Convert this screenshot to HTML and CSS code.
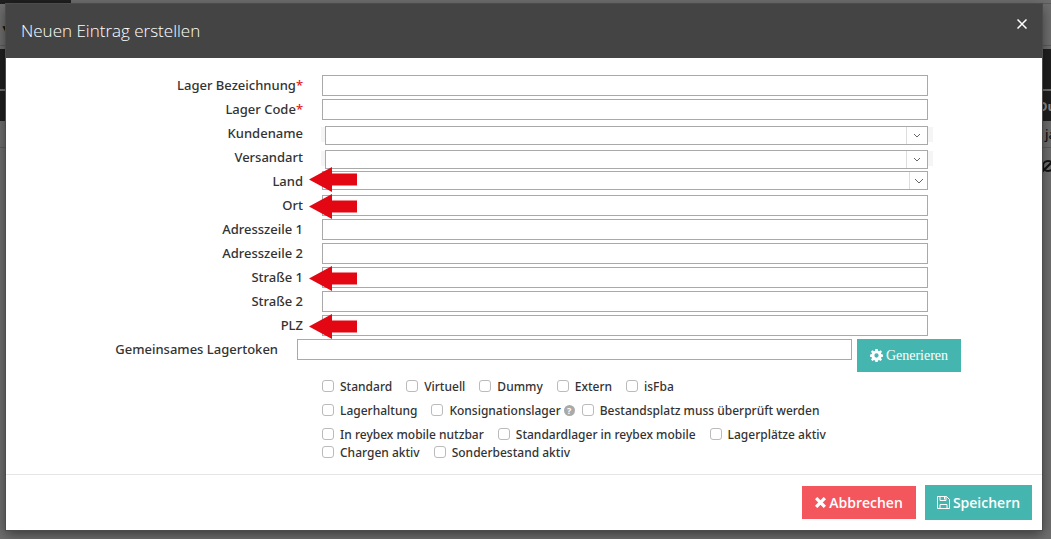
FILE: index.html
```html
<!DOCTYPE html>
<html lang="de">
<head>
  <meta charset="UTF-8" />
  <title>Neuen Eintrag erstellen</title>
  <link rel="stylesheet" href="styles.css">
</head>
<body>
  <!-- Lagerliste im Hintergrund -->
  <div class="page">
    <div class="page-top"><div class="page-tab"></div></div>
    <div class="page-toolbar"><span>▼</span></div>
    <div class="page-nav"></div>
    <div class="page-head"><span>Du</span></div>
    <div class="page-row"><span>ja</span></div>
    <div class="page-row page-row-last">
      <svg width="14" height="14" viewBox="0 0 14 14" fill="none" stroke="currentColor" stroke-width="2"><circle cx="7" cy="7" r="5"/><path d="M1 13L13 1"/></svg>
    </div>
  </div>

  <!-- Dialog -->
  <div class="overlay">
    <form class="modal" role="dialog" aria-labelledby="modalTitle">
      <div class="modal-header">
        <h1 id="modalTitle">Neuen Eintrag erstellen</h1>
        <button type="button" class="close" aria-label="Schließen">
          <svg width="10" height="10" viewBox="0 0 10 10" fill="none" stroke="currentColor" stroke-width="1.500"><path d="M.5.5L9.500 9.500M9.500.5L.5 9.500"/></svg>
        </button>
      </div>

      <div class="modal-body">
        <div class="row">
          <label for="name">Lager Bezeichnung<span class="required">*</span></label>
          <input type="text" id="name">
        </div>
        <div class="row">
          <label for="code">Lager Code<span class="required">*</span></label>
          <input type="text" id="code">
        </div>
        <div class="row">
          <label for="customer">Kundename</label>
          <div class="select combo">
            <select id="customer"><option></option></select>
            <span class="arrow"><svg width="8" height="5" viewBox="0 0 8 5"><path d="M1 1L4 4L7 1"/></svg></span>
          </div>
        </div>
        <div class="row">
          <label for="shipping">Versandart</label>
          <div class="select combo">
            <select id="shipping"><option></option></select>
            <span class="arrow"><svg width="8" height="5" viewBox="0 0 8 5"><path d="M1 1L4 4L7 1"/></svg></span>
          </div>
        </div>
        <div class="row">
          <label for="country">Land</label>
          <div class="select">
            <select id="country"><option></option></select>
            <span class="arrow"><svg width="10" height="6" viewBox="0 0 10 6"><path d="M1 1L5 5L9 1"/></svg></span>
          </div>
          <svg class="marker marker-high" viewBox="0 0 48 25"><path d="M0 12.500L23 0V6.500H48V18.500H23V25Z"/></svg>
        </div>
        <div class="row">
          <label for="city">Ort</label>
          <input type="text" id="city">
          <svg class="marker" viewBox="0 0 48 25"><path d="M0 12.500L23 0V6.500H48V18.500H23V25Z"/></svg>
        </div>
        <div class="row">
          <label for="address1">Adresszeile 1</label>
          <input type="text" id="address1">
        </div>
        <div class="row">
          <label for="address2">Adresszeile 2</label>
          <input type="text" id="address2">
        </div>
        <div class="row">
          <label for="street1">Straße 1</label>
          <input type="text" id="street1">
          <svg class="marker" viewBox="0 0 48 25"><path d="M0 12.500L23 0V6.500H48V18.500H23V25Z"/></svg>
        </div>
        <div class="row">
          <label for="street2">Straße 2</label>
          <input type="text" id="street2">
        </div>
        <div class="row">
          <label for="zip">PLZ</label>
          <input type="text" id="zip">
          <svg class="marker" viewBox="0 0 48 25"><path d="M0 12.500L23 0V6.500H48V18.500H23V25Z"/></svg>
        </div>
        <div class="row row-token">
          <label for="token">Gemeinsames Lagertoken</label>
          <input type="text" id="token">
          <button type="button" class="btn btn-generate">
            <svg width="13" height="13" viewBox="0 0 14 14"><path fill="currentColor" fill-rule="evenodd" d="M5.800 0h2.400l.4 1.900 1.100.5L11.400 1.300l1.500 1.600-1.100 1.600.5 1.200 1.700.3v2.300l-1.700.4-.5 1.100 1.100 1.600-1.600 1.600-1.600-1.100-1.100.5-.4 1.600H5.800l-.4-1.600-1.100-.5-1.600 1.100-1.600-1.600 1.100-1.600-.5-1.100L0 8.300V6l1.700-.3.5-1.200L1.100 2.900l1.500-1.600 1.700 1.100 1.100-.5zM7 4.700a2.300 2.300 0 1 0 0 4.600 2.300 2.300 0 0 0 0-4.600z"/></svg>
            Generieren
          </button>
        </div>

        <div class="checks">
          <div class="check-row">
            <label><input type="checkbox">Standard</label>
            <label><input type="checkbox">Virtuell</label>
            <label><input type="checkbox">Dummy</label>
            <label><input type="checkbox">Extern</label>
            <label><input type="checkbox">isFba</label>
          </div>
          <div class="check-row">
            <label><input type="checkbox">Lagerhaltung</label>
            <div class="with-help">
              <label><input type="checkbox">Konsignationslager</label>
              <span class="help">?</span>
            </div>
            <label><input type="checkbox">Bestandsplatz muss überprüft werden</label>
          </div>
          <div class="check-row check-row-tight">
            <label><input type="checkbox">In reybex mobile nutzbar</label>
            <label><input type="checkbox">Standardlager in reybex mobile</label>
            <label><input type="checkbox">Lagerplätze aktiv</label>
          </div>
          <div class="check-row check-row-tight">
            <label><input type="checkbox">Chargen aktiv</label>
            <label><input type="checkbox">Sonderbestand aktiv</label>
          </div>
        </div>
      </div>

      <div class="modal-footer">
        <button type="button" class="btn btn-cancel">
          <svg width="11" height="11" viewBox="0 0 10 10"><path fill="none" stroke="currentColor" stroke-width="3" d="M1 1L9 9M9 1L1 9"/></svg>
          Abbrechen
        </button>
        <button type="submit" class="btn btn-save">
          <svg width="13" height="13" viewBox="0 0 13 13" fill="none" stroke="currentColor"><path d="M.5.5H9.500L12.500 3.500V12.500H.5ZM3 .5V4.500H9V.5M3 12.500V8.500H10V12.500M7.500 1V3.500"/></svg>
          Speichern
        </button>
      </div>
    </form>
  </div>
</body>
</html>
```

FILE: styles.css
```css
* {
  box-sizing: border-box;
}
body {
  margin: 0;
  min-height: 100vh;
  background: #6e6e6e;
  color: #333;
  font-family: "Noto Sans", "Open Sans", sans-serif;
  font-size: 13px;
  font-weight: 500;
  overflow: hidden;
}

/* Hintergrundseite */
.page {
  color: #111;
}
.page-top {
  height: 4px;
  border-bottom: 1px solid #5c5c5c;
}
.page-tab {
  width: 71px;
  height: 4px;
  background: #1f1f1f;
}
.page-toolbar {
  height: 42px;
  padding-top: 16px;
  border-bottom: 1px solid #5c5c5c;
  font-size: 12px;
}
.page-nav {
  height: 40px;
  margin: 3px 0 2px;
  background: #1f1f1f;
}
.page-head,
.page-row {
  display: flex;
  align-items: center;
  justify-content: flex-end;
  overflow: hidden;
}
.page-head {
  height: 30px;
  background: #1f1f1f;
  color: #8a8a8a;
  font-weight: bold;
}
.page-head span {
  width: 13px;
}
.page-row {
  height: 27px;
  border-bottom: 1px solid #5c5c5c;
}
.page-row span {
  width: 6px;
}
.page-row-last {
  height: 36px;
  border-bottom: 0;
}
.page-row svg {
  margin-right: -4px;
}

/* Dialog */
.overlay {
  position: absolute;
  inset: 0;
  padding: 4px 9px 9px 6px;
}
.modal {
  background: #fff;
  box-shadow: 0 0 0 1px #4c4c4c, 0 4px 12px rgba(0, 0, 0, 0.5);
}
.modal-header {
  display: flex;
  justify-content: space-between;
  height: 54px;
  padding: 15px;
  background: #444;
  color: #fff;
}
.modal-header h1 {
  margin: 0;
  font-family: "Open Sans", sans-serif;
  font-size: 17px;
  font-weight: 300;
  line-height: 24px;
}
.close {
  width: 10px;
  height: 10px;
  padding: 0;
  border: 0;
  background: none;
  color: #fff;
  line-height: 0;
}
.modal-body {
  padding: 17px 0 13px;
}
.row {
  display: grid;
  grid-template-columns: 297px 1fr;
  column-gap: 19px;
  position: relative;
  height: 24px;
  padding-right: 114px;
}
.row > label {
  line-height: 21px;
  text-align: right;
}
.required {
  color: #e02222;
}
.row input,
.row select {
  width: 100%;
  height: 21px;
  margin: 0;
  border: 1px solid #a9a9a9;
  border-radius: 0;
  background: #fff;
}
.select {
  position: relative;
  height: 19px;
}
.row select {
  display: block;
  position: relative;
  height: 19px;
  appearance: none;
}
.combo {
  margin-top: 3px;
  padding-left: 3px;
}
.combo::before {
  content: "";
  position: absolute;
  top: 1px;
  right: -5px;
  left: -1px;
  height: 15px;
  background: #f5f5f5;
}
.arrow {
  display: flex;
  align-items: center;
  justify-content: center;
  position: absolute;
  top: 1px;
  right: 1px;
  bottom: 1px;
  width: 18px;
  border-left: 1px solid #ddd;
  pointer-events: none;
}
.combo .arrow {
  width: 21px;
}
.arrow path {
  fill: none;
  stroke: #666;
}

/* rote Pfeile */
.marker {
  position: absolute;
  top: -1px;
  left: 303px;
  width: 48px;
  height: 25px;
  fill: #e30613;
}
.marker-high {
  top: -4px;
}

.row-token {
  grid-template-columns: 286px 1fr 104px;
  column-gap: 5px;
  height: 33px;
  padding-right: 81px;
}
.row-token label {
  padding-right: 14px;
}
.btn {
  display: flex;
  align-items: center;
  justify-content: center;
  gap: 3px;
  height: 33px;
  padding: 0;
  border: 0;
  color: #fff;
  font-family: "Open Sans", sans-serif;
  font-size: 14px;
  font-weight: 600;
}
.btn-generate {
  background: #45b6af;
  font-family: "Liberation Serif", serif;
  font-weight: 400;
}

/* Checkboxen */
.checks {
  padding: 5px 0 0 316px;
  font-size: 12px;
}
.check-row {
  display: flex;
  gap: 14px;
  height: 24px;
}
.check-row-tight {
  height: 18px;
}
.check-row label {
  display: flex;
  align-items: center;
  gap: 6px;
  height: 18px;
}
.check-row input {
  width: 12px;
  height: 12px;
  margin: 0;
  border: 1px solid #bbb;
  border-radius: 3px;
  background: #fff;
  appearance: none;
}
.with-help {
  display: flex;
  align-items: center;
  gap: 3px;
  height: 18px;
  margin-right: -7px;
}
.help {
  width: 11px;
  height: 11px;
  border-radius: 50%;
  background: #aaa;
  color: #fff;
  font-size: 9px;
  font-weight: 700;
  line-height: 11px;
  text-align: center;
}

.modal-footer {
  display: flex;
  align-items: center;
  justify-content: flex-end;
  gap: 9px;
  height: 56px;
  padding-right: 10px;
  border-top: 1px solid #e5e5e5;
}
.btn-cancel {
  width: 114px;
  background: #f3565d;
}
.btn-save {
  width: 107px;
  height: 35px;
  background: #45b6af;
}
```
